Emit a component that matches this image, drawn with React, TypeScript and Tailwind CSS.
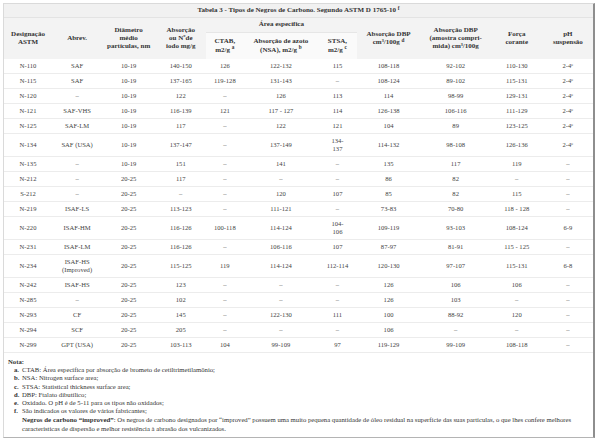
import React from "react";

type Row = {
  d: string;
  a: React.ReactNode;
  v: (string | React.ReactNode)[];
};

const E = (
  <>
    2-4<sup>e</sup>
  </>
);

const rows: Row[] = [
  { d: "N-110", a: "SAF", v: ["10-19", "140-150", "126", "122-132", "115", "108-118", "92-102", "110-130", E] },
  { d: "N-115", a: "SAF", v: ["10-19", "137-165", "119-128", "131-143", "–", "108-124", "89-102", "115-131", E] },
  { d: "N-120", a: "–", v: ["10-19", "122", "–", "126", "113", "114", "98-99", "129-131", E] },
  { d: "N-121", a: "SAF-VHS", v: ["10-19", "116-139", "121", "117 - 127", "114", "126-138", "106-116", "111-129", E] },
  { d: "N-125", a: "SAF-LM", v: ["10-19", "117", "–", "122", "121", "104", "89", "123-125", E] },
  { d: "N-134", a: "SAF (USA)", v: ["10-19", "137-147", "–", "137-149", <>134-<br />137</>, "114-132", "98-108", "126-136", E] },
  { d: "N-135", a: "–", v: ["10-19", "151", "–", "141", "–", "135", "117", "119", "–"] },
  { d: "N-212", a: "–", v: ["20-25", "117", "–", "–", "–", "86", "82", "–", "–"] },
  { d: "S-212", a: "–", v: ["20-25", "–", "–", "120", "107", "85", "82", "115", "–"] },
  { d: "N-219", a: "ISAF-LS", v: ["20-25", "113-123", "–", "111-121", "–", "73-83", "70-80", "118 - 128", "–"] },
  { d: "N-220", a: "ISAF-HM", v: ["20-25", "116-126", "100-118", "114-124", <>104-<br />106</>, "109-119", "93-103", "108-124", "6-9"] },
  { d: "N-231", a: "ISAF-LM", v: ["20-25", "116-126", "–", "106-116", "107", "87-97", "81-91", "115 - 125", "–"] },
  { d: "N-234", a: <>ISAF-HS<br />(Improved)</>, v: ["20-25", "115-125", "119", "114-124", "112-114", "120-130", "97-107", "115-131", "6-8"] },
  { d: "N-242", a: "ISAF-HS", v: ["20-25", "123", "–", "–", "–", "126", "106", "106", "–"] },
  { d: "N-285", a: "–", v: ["20-25", "102", "–", "–", "–", "126", "103", "–", "–"] },
  { d: "N-293", a: "CF", v: ["20-25", "145", "–", "122-130", "111", "100", "88-92", "120", "–"] },
  { d: "N-294", a: "SCF", v: ["20-25", "205", "–", "–", "–", "106", "–", "–", "–"] },
  { d: "N-299", a: "GPT (USA)", v: ["20-25", "103-113", "104", "99-109", "97", "119-129", "99-109", "108-118", "–"] },
];

const widths = [48, 50, 53, 51, 37, 75, 38, 64, 70, 52, 50];

const notes: [string, string][] = [
  ["a.", "CTAB: Área específica por absorção de brometo de cetiltrimetilamônio;"],
  ["b.", "NSA: Nitrogen surface area;"],
  ["c.", "STSA: Statistical thickness surface area;"],
  ["d.", "DBP: Ftalato dibutílico;"],
  ["e.", "Oxidado. O pH é de 5-11 para os tipos não oxidados;"],
  ["f.", "São indicados os valores de vários fabricantes;"],
];

export default function App() {
  const th = "bg-[#f3f3f3] text-[#333] font-bold text-[7px] leading-[8.4px] text-center align-middle px-[2px]";
  const sub = "bg-[#fafafa] text-[#333] font-bold text-[7px] leading-[8.4px] text-center align-middle px-[2px] border-t border-[#e6e6e6]";

  return (
    <div className="w-[600px] h-[443px] bg-white pt-[3px] pl-[3px] font-['Liberation_Serif',serif]">
      <div className="w-[592px] h-[435px] border border-[#dadada] border-r-2 border-r-[#8e8e8e] border-b-[#b4b4b4] bg-white">
        <table className="w-full table-fixed border-collapse">
          <colgroup>
            {widths.map((w, i) => (
              <col key={i} style={{ width: w }} />
            ))}
          </colgroup>
          <thead>
            <tr className="h-[13px]">
              <th colSpan={11} className="bg-[#f1f1f1] text-[#333] font-bold text-[7px] leading-[8px] text-center border-b border-[#e3e3e3]">
                Tabela 3 - Tipos de Negros de Carbono. Segundo ASTM D 1765-10 <sup>f</sup>
              </th>
            </tr>
            <tr className="h-[15px]">
              <th rowSpan={2} className={th}>Designação<br />ASTM</th>
              <th rowSpan={2} className={th}>Abrev.</th>
              <th rowSpan={2} className={th}>Diâmetro<br />médio<br />partículas, nm</th>
              <th rowSpan={2} className={th}>Absorção<br />ou Nºde<br />iodo mg/g</th>
              <th colSpan={3} className={th}>Área específica</th>
              <th rowSpan={2} className={th}>Absorção DBP<br />cm³/100g <sup>d</sup></th>
              <th rowSpan={2} className={th}>Absorção DBP<br />(amostra compri-<br />mida) cm³/100g</th>
              <th rowSpan={2} className={th}>Força<br />corante</th>
              <th rowSpan={2} className={th}>pH<br />suspensão</th>
            </tr>
            <tr className="h-[27px]">
              <th className={sub}>CTAB,<br />m2/g <sup>a</sup></th>
              <th className={sub}>Absorção de azoto<br />(NSA), m2/g <sup>b</sup></th>
              <th className={sub}>STSA,<br />m2/g <sup>c</sup></th>
            </tr>
          </thead>
          <tbody className="text-[6.6px] leading-[8px] text-[#444]">
            {rows.map((r) => (
              <tr key={r.d} className="border-b border-[#ececec]">
                <td className="text-center py-[3px] px-[2px]">{r.d}</td>
                <td className="text-center py-[3px] px-[2px]">{r.a}</td>
                {r.v.map((c, i) => (
                  <td key={i} className="text-center py-[3px] px-[2px]">
                    {c}
                  </td>
                ))}
              </tr>
            ))}
          </tbody>
        </table>

        <div className="pl-[4px] pt-[5px] text-[6.7px] leading-[8.2px] text-[#333]">
          <p className="font-bold">Nota:</p>
          <div className="flex flex-col">
            {notes.map(([k, t]) => (
              <div key={k} className="flex">
                <span className="w-[14px] pl-[6px] font-bold">{k}</span>
                <span>{t}</span>
              </div>
            ))}
          </div>
          <p className="pl-[14px] pt-[1px] whitespace-nowrap">
            <span className="font-bold text-[6.9px]">Negros de carbono “improved”</span>: Os negros de carbono designados por “improved” possuem uma muito pequena quantidade de óleo residual na superfície das suas partículas, o que lhes confere melhores
            <br />
            características de dispersão e melhor resistência à abrasão dos vulcanizados.
          </p>
        </div>
      </div>
    </div>
  );
}
